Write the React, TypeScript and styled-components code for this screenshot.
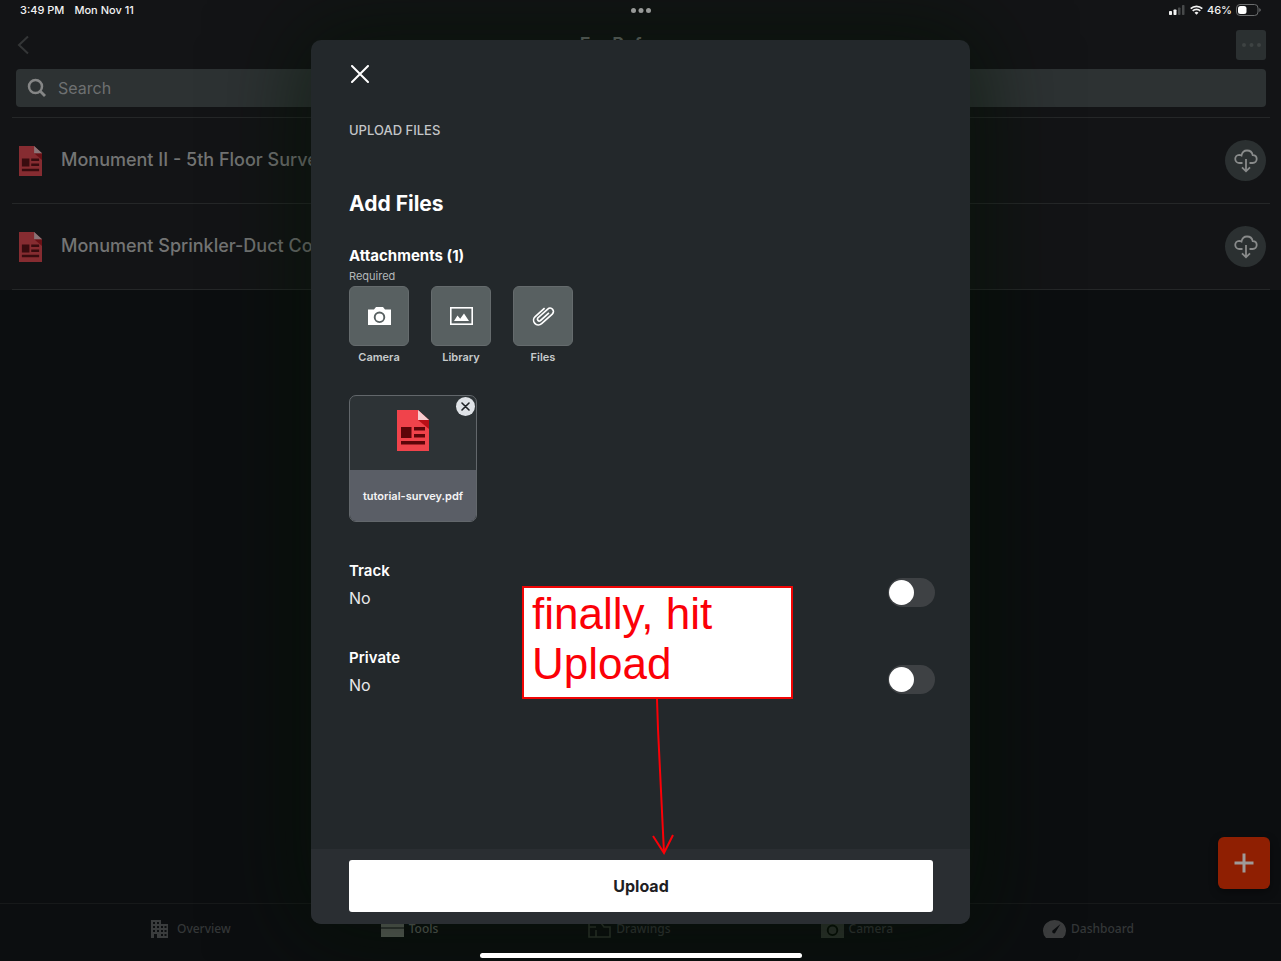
import React from "react";
import styled, { createGlobalStyle } from "styled-components";

const GlobalStyle = createGlobalStyle`
  *, *::before, *::after { box-sizing: border-box; }
  body {
    margin: 0;
    background: #0c0e10;
    font-family: Inter, "Liberation Sans", sans-serif;
  }
  h1, h2, h3, p, ul { margin: 0; padding: 0; }
  button { font: inherit; border: 0; padding: 0; cursor: pointer; }
  svg { display: block; }
`;

const Screen = styled.div`
  position: relative;
  display: flex;
  flex-direction: column;
  min-height: 100vh;
  overflow: hidden;
  background: #0c0e10;
`;

const TopArea = styled.div`
  background: #131416;
`;

const StatusBar = styled.div`
  position: relative;
  z-index: 2;
  display: grid;
  grid-template-columns: 1fr auto 1fr;
  align-items: center;
  height: 20px;
  padding: 0 20px;
  color: #f2f2f2;
  font-size: 11px;
  font-weight: 500;
`;

const StatusGroup = styled.div<{ $end?: boolean }>`
  display: flex;
  align-items: center;
  justify-content: ${(p) => (p.$end ? "flex-end" : "flex-start")};
  gap: ${(p) => (p.$end ? "4px" : "10px")};
`;

const NavBar = styled.header`
  display: grid;
  grid-template-columns: 1fr auto 1fr;
  align-items: center;
  height: 49px;
  padding: 0 15px;
`;

const BackButton = styled.button`
  justify-self: start;
  width: 20px;
  height: 24px;
  background: none;
`;

const NavTitle = styled.h1`
  color: #6f7271;
  font-size: 18px;
  line-height: 24px;
  font-weight: 600;
`;

const MoreButton = styled.button`
  display: grid;
  place-items: center;
  justify-self: end;
  width: 30px;
  height: 30px;
  border-radius: 3px;
  background: #2b3031;
`;

const SearchBox = styled.label`
  display: flex;
  align-items: center;
  gap: 9px;
  height: 38px;
  margin: 0 15px 10px 16px;
  padding: 0 11px;
  border-radius: 4px;
  background: #2d3233;
`;

const SearchInput = styled.input`
  flex: 1;
  min-width: 0;
  border: 0;
  outline: 0;
  background: none;
  color: #8a8c8c;
  font: 400 16px/20px Inter, sans-serif;
  &::placeholder { color: #6d7071; opacity: 1; }
`;

const FileList = styled.ul`
  margin: 0 11px 0 12px;
  list-style: none;
  border-bottom: 1px solid #252728;
`;

const FileRow = styled.li`
  display: flex;
  align-items: center;
  gap: 19px;
  height: 86px;
  padding: 0 4px 0 7px;
  border-top: 1px solid #252728;
`;

const FileName = styled.span`
  flex: 1;
  padding-bottom: 2px;
  color: #737474;
  font-size: 18px;
  line-height: 24px;
  font-weight: 500;
`;

const DownloadButton = styled.button`
  display: grid;
  place-items: center;
  width: 41px;
  height: 41px;
  border-radius: 50%;
  background: #2b3031;
`;

const Workspace = styled.main`
  display: flex;
  flex: 1;
  align-items: flex-end;
  justify-content: flex-end;
  padding: 14px 11px;
`;

const AddButton = styled.button`
  display: grid;
  place-items: center;
  width: 52px;
  height: 52px;
  border-radius: 6px;
  background: #8f1f02;
  box-shadow: 0 3px 8px rgba(0, 0, 0, 0.4);
`;

const TabBar = styled.nav`
  display: flex;
  justify-content: space-between;
  height: 58px;
  padding: 14px 147px 0 149px;
  border-top: 1px solid #17191a;
`;

const Tab = styled.a<{ $active?: boolean }>`
  display: flex;
  align-items: center;
  gap: 5px;
  height: 22px;
  color: ${(p) => (p.$active ? "#5c605b" : "#343738")};
  font-family: "Noto Sans", sans-serif;
  font-size: 12px;
  line-height: 22px;
  font-weight: 500;
  text-decoration: none;
`;

const HomeIndicator = styled.div`
  position: absolute;
  z-index: 2;
  bottom: 3px;
  left: 50%;
  width: 322px;
  height: 5px;
  border-radius: 3px;
  background: #fff;
  transform: translateX(-50%);
`;

const Overlay = styled.div`
  position: absolute;
  z-index: 1;
  inset: 0;
  display: flex;
  justify-content: center;
  padding: 40px 24px 37px;
`;

const Dialog = styled.section`
  position: relative;
  display: flex;
  flex-direction: column;
  width: 100%;
  max-width: 659px;
  border-radius: 10px;
  background: #23282b;
  color: #fff;
  box-shadow: 0 0 90px 10px rgba(4, 18, 4, 0.6);
`;

const DialogBody = styled.div`
  display: flex;
  flex: 1;
  flex-direction: column;
  align-items: stretch;
  padding: 22px 35px 40px 38px;
`;

const CloseButton = styled.button`
  display: grid;
  place-items: center;
  width: 22px;
  height: 24px;
  background: none;
`;

const Eyebrow = styled.p`
  margin-top: 34px;
  color: #c3c6c8;
  font-size: 13px;
  line-height: 20px;
  font-weight: 500;
`;

const DialogTitle = styled.h2`
  margin-top: 50px;
  font-size: 21px;
  line-height: 28px;
  font-weight: 700;
`;

const AttachmentsTitle = styled.h3`
  margin-top: 28px;
  font-size: 15px;
  line-height: 20px;
  font-weight: 700;
`;

const Hint = styled.p`
  margin: 2px 0;
  color: #b4b8ba;
  font-size: 11px;
  line-height: 16px;
`;

const SourceRow = styled.div`
  display: flex;
  gap: 22px;
`;

const SourceButton = styled.button`
  display: flex;
  flex-direction: column;
  gap: 3px;
  width: 60px;
  background: none;
  color: #c8cbcc;
  font-size: 11px;
  line-height: 16px;
  font-weight: 600;
  text-align: center;
`;

const SourceTile = styled.span`
  display: grid;
  place-items: center;
  height: 60px;
  border: 1px solid #656b6d;
  border-radius: 6px;
  background: #586061;
`;

const AttachmentCard = styled.div`
  position: relative;
  width: 128px;
  margin-top: 30px;
  border: 1px solid #62676b;
  border-radius: 7px;
  overflow: hidden;
  background: #2d3336;
`;

const AttachmentPreview = styled.div`
  display: flex;
  justify-content: center;
  height: 74px;
  padding-top: 14px;
`;

const AttachmentName = styled.p`
  height: 51px;
  background: #5a5e66;
  color: #f4f4f5;
  font-size: 11px;
  line-height: 52px;
  font-weight: 600;
  text-align: center;
`;

const RemoveButton = styled.button`
  position: absolute;
  top: 1px;
  right: 1px;
  display: grid;
  place-items: center;
  width: 19px;
  height: 19px;
  border-radius: 50%;
  background: #dfe3e7;
`;

const Settings = styled.div`
  display: grid;
  gap: 40px;
  margin-top: 39px;
`;

const Setting = styled.label`
  display: flex;
  align-items: flex-end;
  justify-content: space-between;
`;

const SettingText = styled.span`
  display: grid;
  gap: 7px;
  line-height: 20px;
`;

const SettingName = styled.span`
  font-size: 15px;
  font-weight: 600;
`;

const SettingValue = styled.span`
  color: #e8e9ea;
  font-size: 16px;
`;

const Switch = styled.input`
  appearance: none;
  width: 47px;
  height: 29px;
  margin: 0 0 1px;
  padding: 2px 1px;
  border-radius: 15px;
  background: #3e4144;
  &::before {
    content: "";
    display: block;
    width: 25px;
    height: 25px;
    border-radius: 50%;
    background: #fff;
  }
  &:checked { background: #34a853; }
  &:checked::before { margin-left: auto; }
`;

const DialogFooter = styled.footer`
  height: 75px;
  padding: 11px 37px 11px 38px;
  border-radius: 0 0 10px 10px;
  background: #2a2e32;
`;

const UploadButton = styled.button`
  width: 100%;
  height: 52px;
  border-radius: 3px;
  background: #fff;
  color: #1e2023;
  font-size: 16px;
  font-weight: 700;
`;

const Callout = styled.aside`
  position: absolute;
  top: 546px;
  left: 211px;
  width: 271px;
  height: 113px;
  padding: 1px 8px;
  border: 2px solid #f00505;
  background: #fff;
  color: #fb0007;
  font-family: "Liberation Sans", Arial, sans-serif;
  font-size: 44px;
  line-height: 50px;
`;

const CalloutArrow = styled.svg`
  position: absolute;
  top: 111px;
  left: 120px;
`;

const PdfIcon = ({ width, height, dim }: { width: number; height: number; dim?: boolean }) => (
  <svg width={width} height={height} viewBox="0 0 32 41" preserveAspectRatio="none" opacity={dim ? 0.52 : 1} aria-hidden="true">
    <path d="M0 0H21L32 10V41H0Z" fill="#f0434b" />
    <path d="M21 10H32V19Z" fill="#b90f17" />
    <path d="M21 0L32 10H21Z" fill="#f8cdd0" />
    <path d="M4 17H14.500V28H4ZM17 17H28V20.500H17ZM17 24H28V27.500H17ZM4 31H28V34.500H4Z" fill="#5d0509" />
  </svg>
);

const Cross = ({ size, color, stroke }: { size: number; color: string; stroke: number }) => (
  <svg width={size} height={size} viewBox={`0 0 ${size} ${size}`} aria-hidden="true">
    <path
      d={`M1 1L${size - 1} ${size - 1}M${size - 1} 1L1 ${size - 1}`}
      stroke={color}
      strokeWidth={stroke}
      strokeLinecap="round"
      fill="none"
    />
  </svg>
);

const CloudDownload = () => (
  <svg width="24" height="24" viewBox="0 0 24 24" fill="none" stroke="#898b8b" strokeWidth="1.800" aria-hidden="true">
    <path d="M8.500 14H5.500a4.100 4.100 0 0 1-.3-8.200c1 0 1.700.2 2.300.6C8.200 3.200 10.400 1.500 13 1.500c3 0 5.200 2 5.700 4.700 2.500.1 4 1.700 4 3.900s-1.700 3.900-4 3.900H15.500" />
    <path d="M12 10V22M8 18.300L12 22.300L16 18.300" />
  </svg>
);

const Signal = () => (
  <svg width="17" height="10" viewBox="0 0 17 10" aria-hidden="true">
    <rect x="0" y="6" width="3" height="4" rx=".7" fill="#f2f2f2" />
    <rect x="4.500" y="4.500" width="3" height="5.500" rx=".7" fill="#f2f2f2" />
    <rect x="9" y="2.500" width="2.500" height="7.500" rx=".7" fill="#47494a" />
    <rect x="13" y="0" width="2.500" height="10" rx=".7" fill="#47494a" />
  </svg>
);

const Wifi = () => (
  <svg width="13" height="10" viewBox="0 0 13 10" fill="none" stroke="#f2f2f2" strokeWidth="1.700" aria-hidden="true">
    <path d="M.7 3.700A8.300 8.300 0 0 1 12.300 3.700M2.700 5.900A5.400 5.400 0 0 1 10.300 5.900" />
    <path d="M6.500 9.800L4.500 7.700a2.800 2.800 0 0 1 4 0Z" fill="#f2f2f2" stroke="none" />
  </svg>
);

const Battery = () => (
  <svg width="25" height="12" viewBox="0 0 25 12" aria-hidden="true">
    <rect x=".5" y=".5" width="21.500" height="11" rx="3.500" fill="none" stroke="#6b6d6e" />
    <rect x="2" y="2" width="8.500" height="8" rx="2.500" fill="#fff" />
    <path d="M23.300 4v4q1.500-.8 1.500-2t-1.500-2Z" fill="#6b6d6e" />
  </svg>
);

const Dots = ({ width, r, color }: { width: number; r: number; color: string }) => (
  <svg width={width} height={r * 2} viewBox={`0 0 ${width} ${r * 2}`} fill={color} aria-hidden="true">
    <circle cx={r} cy={r} r={r} />
    <circle cx={width / 2} cy={r} r={r} />
    <circle cx={width - r} cy={r} r={r} />
  </svg>
);

const CameraShape = ({ color, hole }: { color: string; hole: string }) => (
  <svg width="23" height="18" viewBox="0 0 23 18" aria-hidden="true">
    <path d="M0 2.500H6L8 0H15L17 2.500H23V18H0Z" fill={color} />
    <circle cx="11.500" cy="10.300" r="4.800" fill={color} stroke={hole} strokeWidth="1.900" />
  </svg>
);

const sources = [
  { label: "Camera", icon: <CameraShape color="#fff" hole="#586061" /> },
  {
    label: "Library",
    icon: (
      <svg width="23" height="18" viewBox="0 0 23 18" aria-hidden="true">
        <rect x=".8" y=".8" width="21.400" height="16.400" fill="none" stroke="#fff" strokeWidth="1.600" />
        <path d="M4 14L7.500 8.500L10.200 11.800L14 6.500L19 14Z" fill="#fff" />
      </svg>
    ),
  },
  {
    label: "Files",
    icon: (
      <svg width="24" height="22" viewBox="-12 -11 24 22" fill="none" stroke="#fff" strokeWidth="1.700" aria-hidden="true">
        <path
          transform="rotate(-42)"
          d="M6.500 -4.800H-6.200A4.800 4.800 0 0 0 -6.200 4.800H8.200A3.400 3.400 0 0 0 8.200 -2H-5.200A1.900 1.900 0 0 0 -5.200 1.700H6.500"
        />
      </svg>
    ),
  },
];

const tabs = [
  {
    label: "Overview",
    icon: (
      <svg width="23" height="20" viewBox="0 0 23 20" aria-hidden="true">
        <path fill="#3a3c3d" fillRule="evenodd" d="M2 1H12V5H19V19H2ZM4 3V5H6V3ZM8 3V5H10V3ZM4 7V9H6V7ZM8 7V9H10V7ZM4 11V13H6V11ZM8 11V13H10V11ZM5 15V19H8V15ZM12 7V9H14V7ZM15.500 7V9H17.500V7ZM12 11V13H14V11ZM15.500 11V13H17.500V11ZM12 15V17H14V15ZM15.500 15V17H17.500V15Z" />
      </svg>
    ),
  },
  {
    label: "Tools",
    active: true,
    icon: (
      <svg width="23" height="20" viewBox="0 0 23 20" fill="#5f635e" aria-hidden="true">
        <path d="M0 1H23V4H0ZM0 5H23V8.500H0ZM0 9.500H23V18H0Z" />
      </svg>
    ),
  },
  {
    label: "Drawings",
    icon: (
      <svg width="23" height="20" viewBox="0 0 23 20" fill="none" stroke="#30362f" strokeWidth="1.600" aria-hidden="true">
        <path d="M8 3H1V18H22V8H16L13 4M1 8H8M8 11V18" />
      </svg>
    ),
  },
  { label: "Camera", icon: <CameraShape color="#303530" hole="#070d07" /> },
  {
    label: "Dashboard",
    icon: (
      <svg width="23" height="20" viewBox="0 0 23 20" aria-hidden="true">
        <path d="M3 19A11.500 10.800 0 1 1 20 19Z" fill="#3c3d3e" />
        <path d="M17.500 5L12.800 12.800A1.800 1.800 0 1 1 10.200 11Z" fill="#0c0e10" />
      </svg>
    ),
  },
];

const files = ["Monument II - 5th Floor Survey", "Monument Sprinkler-Duct Coord"];

export default function App() {
  const [settings, setSettings] = React.useState({ Track: false, Private: false });

  return (
    <Screen>
      <GlobalStyle />
      <TopArea>
        <StatusBar>
          <StatusGroup>
            <span>3:49 PM</span>
            <span>Mon Nov 11</span>
          </StatusGroup>
          <Dots width={20} r={2.5} color="#979998" />
          <StatusGroup $end>
            <Signal />
            <Wifi />
            <span>46%</span>
            <Battery />
          </StatusGroup>
        </StatusBar>
        <NavBar>
          <BackButton aria-label="Back">
            <svg width="14" height="20" viewBox="0 0 14 20" fill="none" stroke="#343637" strokeWidth="2" aria-hidden="true">
              <path d="M13 1.500L4 10L13 18.500" />
            </svg>
          </BackButton>
          <NavTitle>For Reference</NavTitle>
          <MoreButton aria-label="More options">
            <Dots width={19} r={2} color="#3e4343" />
          </MoreButton>
        </NavBar>
        <SearchBox>
          <svg width="20" height="20" viewBox="0 0 20 20" fill="none" stroke="#858686" strokeWidth="2.500" aria-hidden="true">
            <circle cx="8.500" cy="8.500" r="6.500" />
            <path d="M13.300 13.300L18 18" strokeWidth="2.800" />
          </svg>
          <SearchInput type="search" placeholder="Search" aria-label="Search" />
        </SearchBox>
        <FileList>
          {files.map((name) => (
            <FileRow key={name}>
              <PdfIcon width={23} height={30} dim />
              <FileName>{name}</FileName>
              <DownloadButton aria-label={`Download ${name}`}>
                <CloudDownload />
              </DownloadButton>
            </FileRow>
          ))}
        </FileList>
      </TopArea>

      <Workspace>
        <AddButton aria-label="Add">
          <svg width="20" height="20" viewBox="0 0 20 20" stroke="#9f9a98" strokeWidth="3" aria-hidden="true">
            <path d="M10 0.500V19.500M0.500 10H19.500" />
          </svg>
        </AddButton>
      </Workspace>

      <TabBar>
        {tabs.map((tab) => (
          <Tab key={tab.label} href={`#${tab.label.toLowerCase()}`} $active={tab.active}>
            {tab.icon}
            {tab.label}
          </Tab>
        ))}
      </TabBar>

      <Overlay>
        <Dialog role="dialog" aria-label="Upload files">
          <DialogBody>
            <CloseButton aria-label="Close">
              <Cross size={18} color="#fff" stroke={2} />
            </CloseButton>
            <Eyebrow>UPLOAD FILES</Eyebrow>
            <DialogTitle>Add Files</DialogTitle>
            <AttachmentsTitle>Attachments (1)</AttachmentsTitle>
            <Hint>Required</Hint>
            <SourceRow>
              {sources.map((source) => (
                <SourceButton key={source.label}>
                  <SourceTile>{source.icon}</SourceTile>
                  <span>{source.label}</span>
                </SourceButton>
              ))}
            </SourceRow>
            <AttachmentCard>
              <AttachmentPreview>
                <PdfIcon width={32} height={41} />
              </AttachmentPreview>
              <AttachmentName>tutorial-survey.pdf</AttachmentName>
              <RemoveButton aria-label="Remove tutorial-survey.pdf">
                <Cross size={9} color="#1f2326" stroke={1.6} />
              </RemoveButton>
            </AttachmentCard>
            <Settings>
              {(["Track", "Private"] as const).map((name) => (
                <Setting key={name}>
                  <SettingText>
                    <SettingName>{name}</SettingName>
                    <SettingValue>{settings[name] ? "Yes" : "No"}</SettingValue>
                  </SettingText>
                  <Switch
                    type="checkbox"
                    role="switch"
                    checked={settings[name]}
                    onChange={(e) => setSettings({ ...settings, [name]: e.target.checked })}
                  />
                </Setting>
              ))}
            </Settings>
          </DialogBody>
          <DialogFooter>
            <UploadButton>Upload</UploadButton>
          </DialogFooter>
          <Callout>
            finally, hit Upload
            <CalloutArrow width="34" height="160" viewBox="0 0 34 160" fill="none" stroke="#fb0007" strokeWidth="2" aria-hidden="true">
              <path d="M13 0L14 30L20 154M9 137L20 154L29 136" />
            </CalloutArrow>
          </Callout>
        </Dialog>
      </Overlay>
      <HomeIndicator />
    </Screen>
  );
}
